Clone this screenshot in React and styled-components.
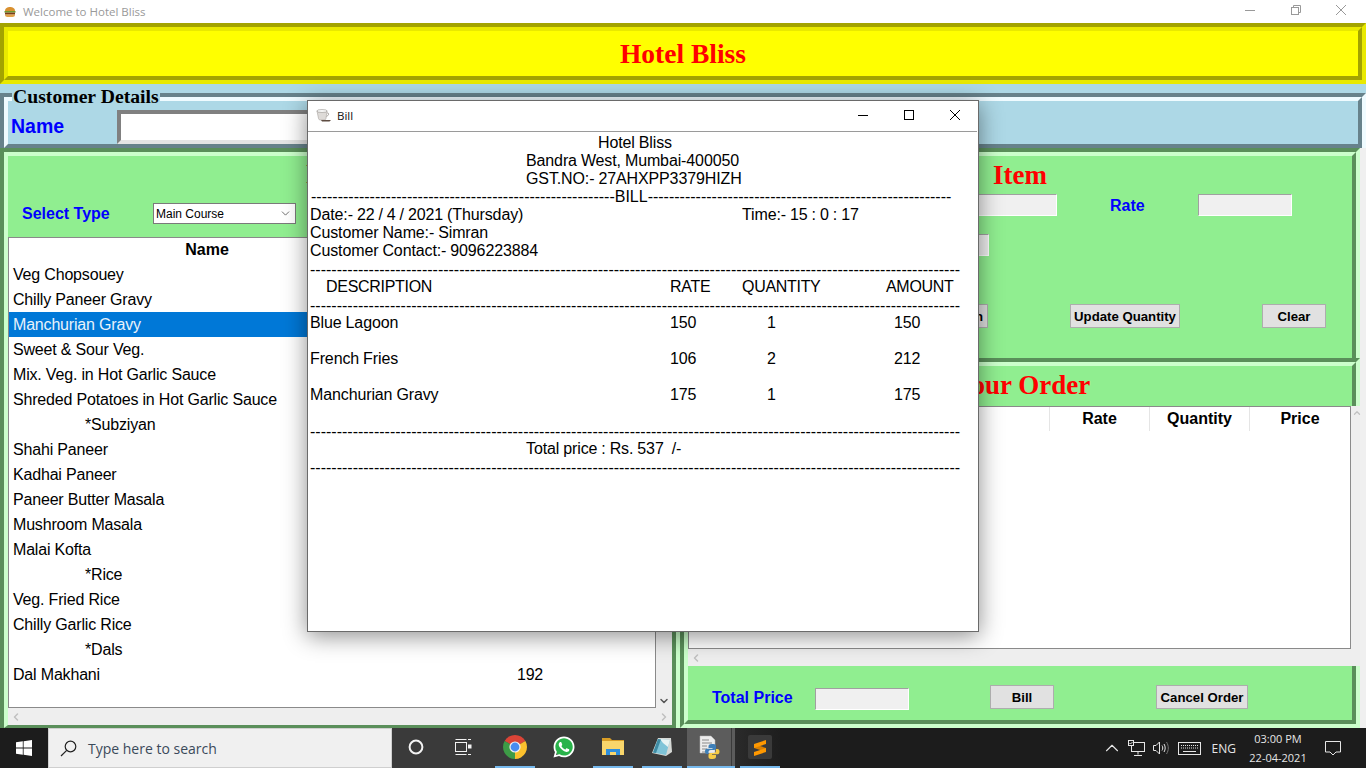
import styled, { createGlobalStyle } from "styled-components";
import { ChevronDown, ChevronLeft, ChevronRight, ChevronUp } from "lucide-react";
import { FaWhatsapp } from "react-icons/fa";

const Global = createGlobalStyle`
  html, body { margin: 0; padding: 0; height: 768px; overflow: hidden; background: #f0f0f0; }
  * { box-sizing: border-box; }
  body { font-family: "Liberation Sans", Arial, sans-serif; color: #000; }
`;

const tones = {
  yellow: { dark: "#a3a300", light: "#e9e900", fill: "#ffff00" },
  blue: { dark: "#67828b", light: "#effbff", fill: "#add8e6" },
  green: { dark: "#5a8f5a", light: "#ccffcc", fill: "#90ee90" },
};

const Page = styled.div`
  width: 1366px;
  height: 768px;
  display: flex;
  flex-direction: column;
  position: relative;
  overflow: hidden;
`;

const TitleBar = styled.div`
  height: 23px;
  flex: none;
  background: #fff;
  display: flex;
  align-items: center;
  padding-left: 4px;
  font-family: "Open Sans", sans-serif;
  font-size: 11.5px;
  color: #999;
  span { margin-left: 7px; flex: 1; }
`;

const CaptionButtons = styled.div`
  display: flex;
  color: ${(p) => p.$color};
  width: ${(p) => p.$width}px;
  justify-content: space-between;
  align-items: center;
  padding-right: ${(p) => p.$right}px;
  padding-bottom: ${(p) => p.$lift}px;
`;

const Panel = styled.div`
  border-style: solid;
  border-color: ${(p) => tones[p.$tone].dark} ${(p) => tones[p.$tone].light} ${(p) => tones[p.$tone].light} ${(p) => tones[p.$tone].dark};
  border-width: ${(p) => (p.$noTop ? 0 : 4)}px ${(p) => (p.$noRight ? 0 : 4)}px ${(p) => (p.$bottom ? 4 : 0)}px 4px;
  height: ${(p) => (p.$height ? `${p.$height}px` : "auto")};
  position: relative;
  flex: none;
`;

const PanelInner = styled.div`
  height: 100%;
  background: ${(p) => tones[p.$tone].fill};
  border-style: solid;
  border-color: ${(p) => tones[p.$tone].light} ${(p) => tones[p.$tone].dark} ${(p) => tones[p.$tone].dark} ${(p) => tones[p.$tone].light};
  border-width: ${(p) => (p.$noTop ? 0 : 4)}px ${(p) => (p.$noRight ? 0 : 4)}px ${(p) => p.$bottom ?? 0}px 4px;
`;

const Banner = styled.h1`
  margin: 0;
  height: 100%;
  display: flex;
  align-items: center;
  justify-content: center;
  font: bold 27.5px "Liberation Serif", serif;
  color: #ff0000;
`;

const BlueGap = styled.div`
  height: 9px;
  flex: none;
  background: #add8e6;
`;

const Legend = styled.div`
  position: absolute;
  left: 8px;
  top: -11px;
  padding: 0 1px;
  height: 20px;
  background: #add8e6;
  font: bold 19.7px/20px "Liberation Serif", serif;
  color: #000;
`;

const CustomerRow = styled.div`
  height: 100%;
  display: flex;
  align-items: flex-end;
  padding-left: 3px;
`;

const NameLabel = styled.label`
  width: 106px;
  margin-bottom: 1px;
  font: bold 19.5px/34px "Liberation Sans", sans-serif;
  color: #0000ff;
`;

const NameInput = styled.div`
  width: 400px;
  height: 34px;
  background: #fff;
  border-style: solid;
  border-width: 4px;
  border-color: #808080 #fff #e4e4e4 #808080;
`;

const Columns = styled.div`
  display: flex;
  height: 580px;
  flex: none;
  width: 1360px;
`;

const Column = styled.div`
  width: 680px;
  display: flex;
  flex-direction: column;
`;

const Heading = styled.h2`
  margin: 0;
  height: ${(p) => p.$height}px;
  line-height: ${(p) => p.$line}px;
  padding-left: ${(p) => p.$shift || 0}px;
  text-align: center;
  font-family: "Liberation Serif", serif;
  font-size: 27px;
  font-weight: bold;
  color: #ff0000;
`;

const SelectRow = styled.div`
  height: 21px;
  margin-top: 9px;
  display: flex;
  align-items: center;
  padding-left: 14px;
`;

const BlueLabel = styled.label`
  width: ${(p) => p.$width}px;
  margin-left: ${(p) => p.$left || 0}px;
  margin-top: ${(p) => p.$down || 0}px;
  flex: none;
  font: bold 16px "Liberation Sans", sans-serif;
  color: #0000ff;
  white-space: nowrap;
`;

const SelectBox = styled.div`
  width: 143px;
  height: 21px;
  border: 1px solid #7a7a7a;
  background: #fff;
  display: flex;
  align-items: center;
  justify-content: space-between;
  padding: 0 3px 0 2px;
  font: 12px "Liberation Sans", sans-serif;
  color: #000;
`;

const ScrollTable = styled.div`
  margin-top: 13px;
  display: flex;
  height: 471px;
`;

const TableFrame = styled.div`
  flex: 1;
  background: #fff;
  border: 1px solid #8a8a8a;
  overflow: hidden;
`;

const VBar = styled.div`
  width: ${(p) => p.$width}px;
  flex: none;
  background: #eeeeee;
  display: flex;
  flex-direction: column;
  justify-content: ${(p) => p.$align};
  align-items: center;
  padding: ${(p) => p.$pad};
  color: ${(p) => p.$color};
`;

const HBar = styled.div`
  height: 17px;
  flex: none;
  background: #eeeeee;
  display: flex;
  align-items: center;
  justify-content: space-between;
  padding: 0 2px;
  color: #c0c0c0;
`;

const MenuHead = styled.div`
  height: 24px;
  display: grid;
  grid-template-columns: 396px 1fr;
  text-align: center;
  font: bold 16px/24px "Liberation Sans", sans-serif;
`;

const MenuRow = styled.div`
  height: 25px;
  display: grid;
  grid-template-columns: 396px 1fr;
  font-size: 16px;
  line-height: 25px;
  letter-spacing: -0.18px;
  background: ${(p) => (p.$selected ? "#0078d7" : "transparent")};
  color: ${(p) => (p.$selected ? "#e8f2fb" : "#000")};
  span:first-child { padding-left: ${(p) => (p.$group ? 76 : 4)}px; }
  span:last-child { text-align: center; }
`;

const FieldRow = styled.div`
  display: flex;
  align-items: center;
  height: 22px;
  margin-top: ${(p) => p.$top}px;
  padding-left: ${(p) => p.$indent}px;
`;

const TextBox = styled.div`
  width: ${(p) => p.$width}px;
  height: 22px;
  flex: none;
  background: #f0f0f0;
  border-style: solid;
  border-width: 1px;
  border-color: #a0a0a0 #fff #fff #a0a0a0;
  margin-top: ${(p) => p.$down || 0}px;
`;

const ButtonRow = styled.div`
  display: flex;
  gap: 82px;
  margin-top: 48px;
  padding-left: 192px;
`;

const Action = styled.button`
  width: ${(p) => p.$width}px;
  height: 24px;
  margin-left: ${(p) => p.$left || 0}px;
  flex: none;
  padding: ${(p) => (p.$end ? "0 4px 0 0" : "0")};
  text-align: ${(p) => (p.$end ? "right" : "center")};
  background: #e1e1e1;
  border: 1px solid #adadad;
  font: bold 13.2px "Liberation Sans", sans-serif;
  color: #000;
  white-space: nowrap;
`;

const OrderBlock = styled.div`
  display: flex;
  height: 243px;
`;

const OrderHead = styled.div`
  height: 24px;
  display: grid;
  grid-template-columns: 361px 100px 100px 100px;
  text-align: center;
  font: bold 16px/24px "Liberation Sans", sans-serif;
  span { border-right: 1px solid #e5e5e5; }
  span:last-child { border-right: 0; }
`;

const TotalRow = styled.div`
  height: 100%;
  display: flex;
  align-items: center;
  padding: 8px 0 0 24px;
`;

const Taskbar = styled.div`
  position: absolute;
  left: 0;
  right: 0;
  bottom: 0;
  height: 40px;
  display: flex;
  background: #1c1c1c;
  color: #fff;
`;

const StartButton = styled.div`
  width: 48px;
  display: flex;
  align-items: center;
  justify-content: center;
`;

const SearchBox = styled.div`
  width: 344px;
  background: #f0f0f0;
  border: 1px solid #cfcfcf;
  display: flex;
  align-items: center;
  padding-left: 11px;
  gap: 11px;
  font: 14px "Open Sans", sans-serif;
  color: #3b4a5a;
`;

const TaskArea = styled.div`
  width: 388px;
  background: linear-gradient(90deg, #3a3a3a 0, #3a3a3a 76%, #262626 92%, #1e1e1e 100%);
  display: flex;
  align-items: stretch;
`;

const TaskCell = styled.div`
  width: ${(p) => p.$width}px;
  margin-left: ${(p) => p.$left || 0}px;
  flex: none;
  display: flex;
  align-items: center;
  justify-content: center;
  padding-right: ${(p) => (p.$active ? 4 : 0)}px;
  background: ${(p) => (p.$active ? "linear-gradient(90deg, #5c5c5c 44px, #3a3a3a 44px, #3a3a3a 45px, #5c5c5c 45px)" : "transparent")};
  border-bottom: 2px solid ${(p) => (p.$running ? "#76b9ed" : "transparent")};
`;

const Tray = styled.div`
  flex: 1;
  display: flex;
  align-items: center;
  justify-content: flex-end;
  font: 12px "Open Sans", sans-serif;
  color: #e6e6e6;
`;

const TrayItem = styled.div`
  margin-right: ${(p) => p.$gap}px;
  display: flex;
  align-items: center;
`;

const Clock = styled.div`
  width: 66px;
  margin-right: 14px;
  text-align: center;
  line-height: 19px;
  font-size: 11px;
`;

const BillWindow = styled.div`
  position: absolute;
  left: 307px;
  top: 100px;
  width: 672px;
  height: 532px;
  background: #fff;
  border: 1px solid #6a6a6a;
  box-shadow: 0 4px 22px rgba(0, 0, 0, 0.45);
`;

const BillTitle = styled.div`
  height: 31px;
  display: flex;
  align-items: center;
  padding: 0 0 2px 8px;
  border-bottom: 1px solid #9a9a9a;
  margin-right: 1px;
  font: 11.5px "Open Sans", sans-serif;
  color: #111;
  span { margin-left: 5px; flex: 1; }
`;

const BillBody = styled.div`
  padding-top: 2px;
  font-size: 16px;
  line-height: 18px;
  letter-spacing: -0.12px;
  word-spacing: -0.3px;
  color: #000;
`;

const BillLine = styled.div`
  height: 18px;
  padding-left: ${(p) => p.$indent || 2}px;
  white-space: pre;
  overflow: hidden;
`;

const DashLine = styled.div`
  height: 18px;
  padding: ${(p) => (p.$raised ? 0 : 1)}px 0 0 ${(p) => p.$indent || 2}px;
  white-space: pre;
  letter-spacing: 0;
  overflow: hidden;
`;

const BillGrid = styled.div`
  height: 18px;
  display: grid;
  grid-template-columns: ${(p) => p.$cols};
  padding-left: ${(p) => p.$indent}px;
  letter-spacing: ${(p) => p.$spacing ?? -0.12}px;
  white-space: pre;
`;

const Burger = () => (
  <svg width="12" height="12" viewBox="0 0 12 12">
    <path d="M1 5C1 2 3.5 1 6 1s5 1 5 4Z" fill="#d9902f" />
    <rect x="0.5" y="5" width="11" height="1.6" fill="#6f9a2e" />
    <rect x="1" y="6.6" width="10" height="2" fill="#7a3c18" />
    <path d="M1 8.6h10C11 10.6 10 11 8.5 11h-5C2 11 1 10.6 1 8.6Z" fill="#e2a24a" />
  </svg>
);

const Cup = () => (
  <svg width="16" height="13" viewBox="0 0 16 13">
    <path d="M1 2h10l-1 7.5c-.2 1-1 1.5-2 1.5H4.5c-1 0-1.8-.5-2-1.5Z" fill="#dedbd8" stroke="#a8a39f" strokeWidth=".6" />
    <ellipse cx="6" cy="2" rx="5.2" ry="1.4" fill="#fff" stroke="#8f8b86" strokeWidth=".6" />
    <path d="M11 4c2-.5 2.500 2-.5 3.500" fill="none" stroke="#a8a39f" />
    <path d="M5 11h10l-1.500 1.500H6Z" fill="#5e4c42" />
  </svg>
);

const MinIcon = () => (
  <svg width="10" height="10" viewBox="0 0 10 10" stroke="currentColor">
    <path d="M0 5.500h10" />
  </svg>
);

const MaxIcon = () => (
  <svg width="10" height="10" viewBox="0 0 10 10" fill="none" stroke="currentColor">
    <rect x="0.5" y="0.5" width="9" height="9" />
  </svg>
);

const CloseIcon = () => (
  <svg width="10" height="10" viewBox="0 0 10 10" stroke="currentColor">
    <path d="M0 0 10 10M10 0 0 10" />
  </svg>
);

const RestoreIcon = () => (
  <svg width="10" height="10" viewBox="0 0 10 10" fill="none" stroke="currentColor">
    <rect x="0.5" y="2.5" width="7" height="7" />
    <path d="M2.500 2.500v-2h7v7h-2" />
  </svg>
);

const WindowsLogo = () => (
  <svg width="16" height="16" viewBox="0 0 16 16" fill="#fff">
    <path d="M0 2.300 6.800 1.300V7.500H0ZM7.600 1.200 16 0V7.500H7.600ZM0 8.400H6.800V14.700L0 13.700ZM7.600 8.400H16V16L7.600 14.800Z" />
  </svg>
);

const SearchIcon = () => (
  <svg width="17" height="17" viewBox="0 0 17 17" fill="none" stroke="#222" strokeWidth="1.2">
    <circle cx="10.500" cy="6.500" r="5.300" />
    <path d="M6.700 10.300 1 16" />
  </svg>
);

const CortanaRing = () => (
  <svg width="16" height="16" viewBox="0 0 16 16">
    <circle cx="8" cy="8" r="6.400" fill="none" stroke="#f2f2f2" strokeWidth="2" />
  </svg>
);

const TaskView = () => (
  <svg width="17" height="16" viewBox="0 0 17 16" fill="none" stroke="#f2f2f2">
    <path d="M.5 .5h11M.5 15.500h11" />
    <rect x="0.5" y="3.500" width="11" height="9" />
    <path d="M13 .5h3M13 15.500h3" />
    <rect x="13.500" y="6" width="2.500" height="3" fill="#f2f2f2" />
  </svg>
);

const Chrome = () => (
  <svg width="24" height="24" viewBox="0 0 24 24">
    <path d="M12 12 22.390 6A12 12 0 0 0 1.610 6Z" fill="#db4437" />
    <path d="M12 12 12 24A12 12 0 0 0 22.390 6Z" fill="#fbc02d" />
    <path d="M12 12 1.610 6A12 12 0 0 0 12 24Z" fill="#3d9b46" />
    <circle cx="12" cy="12" r="5.600" fill="#f1f1f1" />
    <circle cx="12" cy="12" r="4.400" fill="#4a8cf0" />
  </svg>
);

const WhatsappBadge = styled.div`
  width: 24px;
  height: 24px;
  position: relative;
  display: flex;
  align-items: center;
  justify-content: center;
  color: #fff;
  &::before {
    content: "";
    position: absolute;
    inset: 2px;
    border-radius: 50%;
    background: #29b34a;
  }
  svg { position: relative; }
`;

const Folder = () => (
  <svg width="22" height="20" viewBox="0 0 22 20">
    <path d="M0 1h8l2 2h12v3H0Z" fill="#d99e26" />
    <rect x="0" y="4" width="22" height="14" fill="#f9d66b" />
    <path d="M4 18v-6h14v6h-4v-3H8v3Z" fill="#2f8fdc" />
  </svg>
);

const Notepad = () => (
  <svg width="22" height="22" viewBox="0 0 22 22">
    <path d="M7 2 20 2 21 16 15 20 1 17Z" fill="#d6d9d6" />
    <path d="M7 3 19 4 15 19 2 16.500Z" fill="#7fc4d8" />
    <path d="M9 3 19 4 17 11 12 7Z" fill="#e8f3f3" />
    <path d="M2 16.500 7 3l3 .5-5 13.500Z" fill="#3f8ba3" />
  </svg>
);

const PythonDoc = () => (
  <svg width="24" height="24" viewBox="0 0 24 24">
    <path d="M3 1h11l4 4v13H3Z" fill="#ececec" stroke="#b8b8b8" strokeWidth=".5" />
    <path d="M5 5h7M5 8h10M5 11h5M5 14h5M5 17h5" stroke="#8a8a8a" />
    <path d="M15 9c-3 0-3.500 1-3.500 2.500V13h4v.8h-5.700C8.500 13.800 8 15 8 16.500S8.800 19 10 19h1.500v-2c0-1.200 1-2 2.200-2h3.400c1 0 1.900-.8 1.900-2v-2c0-1.200-1-2-2.500-2Z" fill="#3d7fb8" />
    <path d="M15.500 24c3 0 3.500-1 3.500-2.500V20h-4v-.8h5.700c1.300 0 1.800-1.200 1.800-2.700S21.700 14 20.500 14H19v2c0 1.200-1 2-2.200 2h-3.400c-1 0-1.900.8-1.900 2v2c0 1.200 1 2 2.500 2Z" fill="#f7cd46" />
  </svg>
);

const Sublime = () => (
  <svg width="24" height="24" viewBox="0 0 24 24">
    <rect width="24" height="24" rx="2" fill="#3a3a3a" />
    <path d="M6 9 18 13v4L6 13Z" fill="#d97f00" />
    <path d="M6 9 18 5v4L6 13ZM18 13v4L6 21v-4Z" fill="#ff9800" />
  </svg>
);

const NetworkIcon = () => (
  <svg width="17" height="17" viewBox="0 0 17 17" fill="none" stroke="#e6e6e6">
    <rect x="3.500" y="2.500" width="13" height="9" />
    <path d="M10 11.500v3M6 15.500h8" />
    <rect x="0.500" y="0.500" width="5" height="5" fill="#1c1c1c" />
    <path d="M1.500 3l1 1 2-2" />
  </svg>
);

const SpeakerIcon = () => (
  <svg width="16" height="14" viewBox="0 0 16 14" fill="none" stroke="#e6e6e6">
    <path d="M.5 4.500h2.500l3.500-3.500v12l-3.500-3.500H.5Z" />
    <path d="M9 4.500c1 1.500 1 3.500 0 5" />
    <path d="M11 3c1.600 2.500 1.600 5.500 0 8" />
    <path d="M13.500 1c2.400 4 2.400 8 0 12" stroke="#777" />
  </svg>
);

const KeyboardIcon = () => (
  <svg width="23" height="13" viewBox="0 0 23 13" fill="none" stroke="#e6e6e6">
    <rect x="0.500" y="0.500" width="22" height="12" />
    <path d="M3 3.500h17M3 6h17" strokeDasharray="1 1" />
    <path d="M5 9.500h13" />
  </svg>
);

const NoteIcon = () => (
  <svg width="16" height="15" viewBox="0 0 16 15" fill="none" stroke="#e6e6e6">
    <path d="M.5 .5h15v10.500h-4.500l-3 3-3-3H.5Z" />
  </svg>
);

const menu = [
  { name: "Veg Chopsouey" },
  { name: "Chilly Paneer Gravy" },
  { name: "Manchurian Gravy", selected: true },
  { name: "Sweet & Sour Veg." },
  { name: "Mix. Veg. in Hot Garlic Sauce" },
  { name: "Shreded Potatoes in Hot Garlic Sauce" },
  { name: "*Subziyan", group: true },
  { name: "Shahi Paneer" },
  { name: "Kadhai Paneer" },
  { name: "Paneer Butter Masala" },
  { name: "Mushroom Masala" },
  { name: "Malai Kofta" },
  { name: "*Rice", group: true },
  { name: "Veg. Fried Rice" },
  { name: "Chilly Garlic Rice" },
  { name: "*Dals", group: true },
  { name: "Dal Makhani", rate: "192" },
];

const itemCols = "360px 97px 127px auto";
const headCols = "344px 72px 144px auto";
const dashes = (n) => "-".repeat(n);

const billItems = [
  ["Blue Lagoon", "150", "1", "150"],
  ["French Fries", "106", "2", "212"],
  ["Manchurian Gravy", "175", "1", "175"],
];

export default function App() {
  return (
    <Page>
      <Global />
      <TitleBar>
        <Burger />
        <span>Welcome to Hotel Bliss</span>
        <CaptionButtons $color="#999" $width={121} $right={20} $lift={3}>
          <MinIcon />
          <RestoreIcon />
          <CloseIcon />
        </CaptionButtons>
      </TitleBar>

      <Panel $tone="yellow" $bottom $height={61}>
        <PanelInner $tone="yellow" $bottom={4}>
          <Banner>Hotel Bliss</Banner>
        </PanelInner>
      </Panel>
      <BlueGap />

      <Panel $tone="blue" $height={55}>
        <Legend>Customer Details</Legend>
        <PanelInner $tone="blue" $bottom={4}>
          <CustomerRow>
            <NameLabel>Name</NameLabel>
            <NameInput />
          </CustomerRow>
        </PanelInner>
      </Panel>

      <Columns>
        <Column>
          <Panel $tone="green" $height={580}>
            <PanelInner $tone="green" $bottom={3}>
              <Heading $height={38} $line={36}>Menu</Heading>
              <SelectRow>
                <BlueLabel $width={131}>Select Type</BlueLabel>
                <SelectBox>
                  Main Course
                  <ChevronDown size={13} strokeWidth={1.4} color="#444" />
                </SelectBox>
              </SelectRow>
              <ScrollTable>
                <TableFrame>
                  <MenuHead>
                    <span>Name</span>
                  </MenuHead>
                  {menu.map((row) => (
                    <MenuRow key={row.name} $selected={row.selected} $group={row.group}>
                      <span>{row.name}</span>
                      <span>{row.rate}</span>
                    </MenuRow>
                  ))}
                </TableFrame>
                <VBar $width={16} $align="flex-end" $pad="0 0 1px" $color="#555">
                  <ChevronDown size={12} strokeWidth={3} />
                </VBar>
              </ScrollTable>
              <HBar>
                <ChevronLeft size={12} strokeWidth={3} />
                <ChevronRight size={12} strokeWidth={3} />
              </HBar>
            </PanelInner>
          </Panel>
        </Column>

        <Column>
          <Panel $tone="green" $height={210}>
            <PanelInner $tone="green">
              <Heading $height={38} $line={38}>Item</Heading>
              <FieldRow $top={0} $indent={219}>
                <TextBox $width={150} />
                <BlueLabel $width={88} $left={53} $down={2}>Rate</BlueLabel>
                <TextBox $width={94} />
              </FieldRow>
              <FieldRow $top={18} $indent={207}>
                <TextBox $width={94} />
              </FieldRow>
              <ButtonRow>
                <Action $width={108} $end>Add Selection</Action>
                <Action $width={110}>Update Quantity</Action>
                <Action $width={64}>Clear</Action>
              </ButtonRow>
            </PanelInner>
          </Panel>

          <Panel $tone="green" $height={48}>
            <PanelInner $tone="green">
              <Heading $height={40} $line={38} $shift={5}>Your Order</Heading>
            </PanelInner>
          </Panel>

          <Panel $tone="green" $noTop $noRight>
            <PanelInner $tone="green" $noTop $noRight>
              <OrderBlock>
                <TableFrame>
                  <OrderHead>
                    <span />
                    <span>Rate</span>
                    <span>Quantity</span>
                    <span>Price</span>
                  </OrderHead>
                </TableFrame>
                <VBar $width={9} $align="flex-start" $pad="2px 0 0 3px" $color="#c0c0c0">
                  <ChevronUp size={10} strokeWidth={3} />
                </VBar>
              </OrderBlock>
              <HBar>
                <ChevronLeft size={12} strokeWidth={3} />
              </HBar>
            </PanelInner>
          </Panel>

          <Panel $tone="green" $noTop $bottom $height={62}>
            <PanelInner $tone="green" $noTop $bottom={4}>
              <TotalRow>
                <BlueLabel $width={103} $down={2}>Total Price</BlueLabel>
                <TextBox $width={94} $down={4} />
                <Action $width={64} $left={81}>Bill</Action>
                <Action $width={92} $left={102}>Cancel Order</Action>
              </TotalRow>
            </PanelInner>
          </Panel>
        </Column>
      </Columns>

      <BillWindow>
        <BillTitle>
          <Cup />
          <span>Bill</span>
          <CaptionButtons $color="#000" $width={119} $right={17} $lift={0}>
            <MinIcon />
            <MaxIcon />
            <CloseIcon />
          </CaptionButtons>
        </BillTitle>
        <BillBody>
          <BillLine $indent={290}>Hotel Bliss</BillLine>
          <BillLine $indent={218}>Bandra West, Mumbai-400050</BillLine>
          <BillLine $indent={218}>GST.NO:- 27AHXPP3379HIZH</BillLine>
          <DashLine $raised $indent={3}>{dashes(57)}BILL{dashes(57)}</DashLine>
          <BillGrid $cols="432px auto" $indent={2}>
            <span>Date:- 22 / 4 / 2021 (Thursday)</span>
            <span>Time:- 15 : 0 : 17</span>
          </BillGrid>
          <BillLine>Customer Name:- Simran</BillLine>
          <BillLine>Customer Contact:- 9096223884</BillLine>
          <DashLine>{dashes(122)}</DashLine>
          <BillGrid $cols={headCols} $indent={18} $spacing={-0.3}>
            <span>DESCRIPTION</span>
            <span>RATE</span>
            <span>QUANTITY</span>
            <span>AMOUNT</span>
          </BillGrid>
          <DashLine>{dashes(122)}</DashLine>
          {billItems.map((item) => (
            <div key={item[0]}>
              <BillGrid $cols={itemCols} $indent={2}>
                {item.map((cell, i) => (
                  <span key={i}>{cell}</span>
                ))}
              </BillGrid>
              <BillLine />
            </div>
          ))}
          <DashLine>{dashes(122)}</DashLine>
          <BillLine $indent={218}>{"Total price : Rs. 537  /-"}</BillLine>
          <DashLine>{dashes(122)}</DashLine>
        </BillBody>
      </BillWindow>

      <Taskbar>
        <StartButton>
          <WindowsLogo />
        </StartButton>
        <SearchBox>
          <SearchIcon />
          Type here to search
        </SearchBox>
        <TaskArea>
          <TaskCell $width={48}>
            <CortanaRing />
          </TaskCell>
          <TaskCell $width={47}>
            <TaskView />
          </TaskCell>
          <TaskCell $width={40} $left={8} $running>
            <Chrome />
          </TaskCell>
          <TaskCell $width={58}>
            <WhatsappBadge>
              <FaWhatsapp size={24} />
            </WhatsappBadge>
          </TaskCell>
          <TaskCell $width={40} $running>
            <Folder />
          </TaskCell>
          <TaskCell $width={40} $left={9} $running>
            <Notepad />
          </TaskCell>
          <TaskCell $width={48} $left={5} $running $active>
            <PythonDoc />
          </TaskCell>
          <TaskCell $width={40} $left={5} $running>
            <Sublime />
          </TaskCell>
        </TaskArea>
        <Tray>
          <TrayItem $gap={5}><ChevronUp size={22} strokeWidth={1.2} /></TrayItem>
          <TrayItem $gap={8}><NetworkIcon /></TrayItem>
          <TrayItem $gap={9}><SpeakerIcon /></TrayItem>
          <TrayItem $gap={11}><KeyboardIcon /></TrayItem>
          <TrayItem $gap={9}>ENG</TrayItem>
          <Clock>
            03:00 PM
            <br />
            22-04-2021
          </Clock>
          <TrayItem $gap={25}><NoteIcon /></TrayItem>
        </Tray>
      </Taskbar>
    </Page>
  );
}
